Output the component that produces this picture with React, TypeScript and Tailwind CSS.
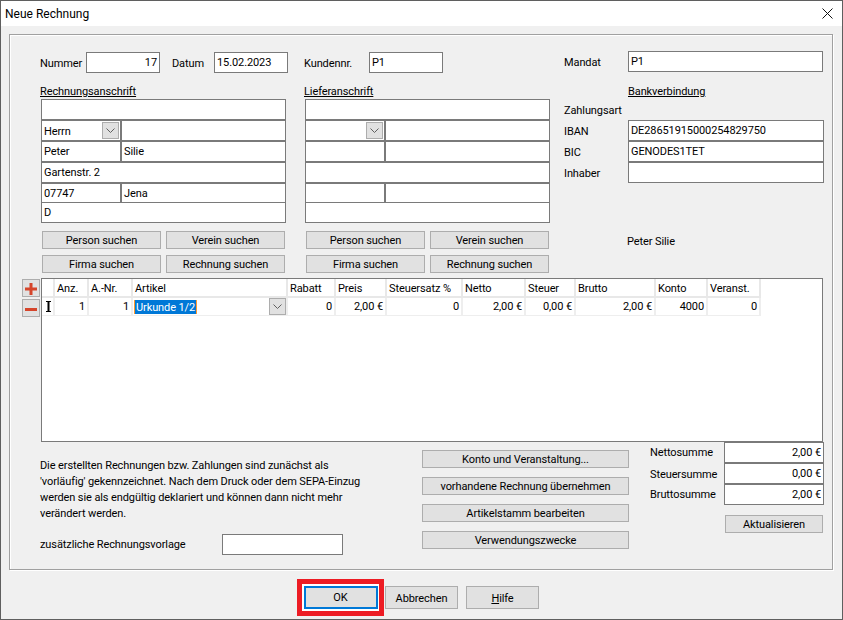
import React from "react";

const Lbl = ({ children, className = "" }: { children: React.ReactNode; className?: string }) => (
  <span className={"whitespace-nowrap leading-4 " + className}>{children}</span>
);

const Inp = ({ v = "", right = false, className = "" }: { v?: string; right?: boolean; className?: string }) => (
  <div
    className={
      "h-[21px] shrink-0 border border-[#7a7a7a] bg-white flex items-center px-[2px] leading-4 whitespace-nowrap " +
      (right ? "justify-end pr-[2px] " : "") +
      className
    }
  >
    {v}
  </div>
);

const Btn = ({ children, className = "" }: { children: React.ReactNode; className?: string }) => (
  <button className={"h-[18px] shrink-0 border border-[#adadad] bg-[#e1e1e1] flex items-center justify-center leading-4 whitespace-nowrap pt-[2px] " + className}>
    {children}
  </button>
);

const Chevron = () => (
  <svg width="9" height="5" viewBox="0 0 9 5" fill="none" stroke="#606060" strokeWidth="1">
    <path d="M0.5 0.5 L4.5 4.5 L8.5 0.5" />
  </svg>
);

const Drop = ({ className = "" }: { className?: string }) => (
  <span className={"w-[17px] h-[17px] border border-[#adadad] bg-[#e1e1e1] flex items-center justify-center shrink-0 " + className}>
    <Chevron />
  </span>
);

const Address = ({ rows, salutation }: { rows: string[]; salutation: string }) => (
  <div className="w-[245px] flex flex-col">
    <Inp v={rows[0]} />
    <div className="flex">
      <div className="w-[80px] h-[21px] border border-[#7a7a7a] bg-white flex items-center justify-between pl-[2px] pr-[1px]">
        <span className="pt-[3px]">{salutation}</span>
        <Drop />
      </div>
      <Inp v={rows[1]} className="flex-1" />
    </div>
    <div className="flex">
      <Inp v={rows[2]} className="w-[80px]" />
      <Inp v={rows[3]} className="flex-1" />
    </div>
    <Inp v={rows[4]} />
    <div className="flex h-[20px]">
      <Inp v={rows[5]} className="w-[80px] h-[20px]" />
      <Inp v={rows[6]} className="flex-1 h-[20px]" />
    </div>
    <Inp v={rows[7]} className="-mt-[1px]" />
  </div>
);

const SearchButtons = () => (
  <div className="w-[243px] ml-[1px] mt-[8px] grid grid-cols-[119px_119px] gap-x-[5px] gap-y-[6px]">
    <Btn>Person suchen</Btn>
    <Btn>Verein suchen</Btn>
    <Btn>Firma suchen</Btn>
    <Btn>Rechnung suchen</Btn>
  </div>
);

const cols = [
  { w: 34, h: "Anz.", v: "1" },
  { w: 44, h: "A.-Nr.", v: "1" },
  { w: 155, h: "Artikel", v: "" },
  { w: 48, h: "Rabatt", v: "0" },
  { w: 51, h: "Preis", v: "2,00 €" },
  { w: 76, h: "Steuersatz %", v: "0" },
  { w: 63, h: "Netto", v: "2,00 €" },
  { w: 50, h: "Steuer", v: "0,00 €" },
  { w: 80, h: "Brutto", v: "2,00 €" },
  { w: 52, h: "Konto", v: "4000" },
  { w: 53, h: "Veranst.", v: "0" },
];

const Grid = () => (
  <div className="w-[782px] h-[164px] border border-[#7a7a7a] bg-white">
    <div className="flex h-[19px] w-fit border-b-2 border-[#e8e8e8]">
      <div className="w-[13px] border-r-2 border-[#e8e8e8]" />
      {cols.map((c) => (
        <div
          key={c.h}
          style={{ width: c.w }}
          className="border-r-2 border-[#e8e8e8] pl-[2px] pt-[4px] flex items-center whitespace-nowrap overflow-hidden"
        >
          {c.h}
        </div>
      ))}
    </div>
    <div className="flex h-[18px] w-fit border-b border-[#eeeeee]">
      <div className="w-[13px] border-r-2 border-[#eeeeee] pl-[4px] flex items-center">
        <svg width="5" height="11" viewBox="0 0 5 11" fill="#000">
          <path d="M0 0 H5 V1 H3.5 V10 H5 V11 H0 V10 H1.5 V1 H0 Z" />
        </svg>
      </div>
      {cols.map((c) =>
        c.h === "Artikel" ? (
          <div key={c.h} style={{ width: c.w }} className="border-r-2 border-[#eeeeee] flex items-center justify-between pl-[1px]">
            <span className="h-[14px] bg-[#0078d7] text-white flex items-center leading-none px-[1px] pt-[1px] border-x border-[#ff9a2e]">Urkunde 1/2</span>
            <Drop className="h-[16px]" />
          </div>
        ) : (
          <div
            key={c.h}
            style={{ width: c.w }}
            className="border-r-2 border-[#eeeeee] pr-[2px] pt-[2px] flex items-center justify-end whitespace-nowrap"
          >
            {c.v}
          </div>
        )
      )}
    </div>
  </div>
);

const SumRow = ({ l, v, pad = "" }: { l: string; v: string; pad?: string }) => (
  <div className="flex items-center">
    <Lbl className={"w-[74px] " + pad}>{l}</Lbl>
    <Inp v={v} right className="w-[100px]" />
  </div>
);

export default function App() {
  return (
    <div
      className="w-[843px] h-[620px] bg-[#f0f0f0] border border-[#5f5f5f] flex flex-col text-[11px] tracking-[-0.1px] text-black overflow-hidden"
      style={{ fontFamily: 'Roboto, sans-serif' }}
    >
      <div className="h-[25px] shrink-0 bg-white flex items-center justify-between pl-[4px] pr-[9px]">
        <span className="text-[12px] tracking-normal">Neue Rechnung</span>
        <svg width="11" height="11" viewBox="0 0 11 11" stroke="#111" strokeWidth="1">
          <path d="M0.5 0.5 L10.5 10.5 M10.5 0.5 L0.5 10.5" />
        </svg>
      </div>

      <div className="mt-[8px] ml-[8px] w-[824px] h-[536px] shrink-0 border border-[#a0a0a0] shadow-[1px_1px_0_#fff,inset_1px_1px_0_#fff] pt-[17px]">
        <div className="flex">
          {/* Rechnungsanschrift */}
          <div className="w-[264px] ml-[30px] flex flex-col">
            <div className="flex items-center h-[21px]">
              <Lbl className="w-[46px] pt-[3px]">Nummer</Lbl>
              <Inp v="17" right className="w-[74px]" />
              <Lbl className="ml-[12px] w-[42px] pt-[3px]">Datum</Lbl>
              <Inp v="15.02.2023" className="w-[74px]" />
            </div>
            <Lbl className="mt-[10px] pt-[1px] underline h-[16px]">Rechnungsanschrift</Lbl>
            <div className="ml-[1px]">
              <Address salutation="Herrn" rows={["", "", "Peter", "Silie", "Gartenstr. 2", "07747", "Jena", "D"]} />
              <SearchButtons />
            </div>
          </div>

          {/* Lieferanschrift */}
          <div className="w-[260px] flex flex-col">
            <div className="flex items-center h-[21px]">
              <Lbl className="w-[65px] pt-[2px]">Kundennr.</Lbl>
              <Inp v="P1" className="w-[74px]" />
            </div>
            <Lbl className="mt-[10px] pt-[1px] underline h-[16px]">Lieferanschrift</Lbl>
            <div className="ml-[1px]">
              <Address salutation="" rows={["", "", "", "", "", "", "", ""]} />
              <SearchButtons />
            </div>
          </div>

          {/* Bank */}
          <div className="w-[260px] flex flex-col">
            <div className="flex items-center h-[21px] -mt-[1px]">
              <Lbl className="w-[64px] pt-[2px]">Mandat</Lbl>
              <Inp v="P1" className="w-[195px]" />
            </div>
            <Lbl className="mt-[11px] pt-[1px] underline h-[16px] ml-[64px]">Bankverbindung</Lbl>
            <Lbl className="h-[16px] mt-[3px] pt-[1px] mb-[2px]">Zahlungsart</Lbl>
            <div className="flex items-center">
              <Lbl className="w-[64px] pt-[2px]">IBAN</Lbl>
              <Inp v="DE28651915000254829750" className="w-[196px]" />
            </div>
            <div className="flex items-center">
              <Lbl className="w-[64px] pt-[2px]">BIC</Lbl>
              <Inp v="GENODES1TET" className="w-[196px]" />
            </div>
            <div className="flex items-center">
              <Lbl className="w-[64px] pt-[2px]">Inhaber</Lbl>
              <Inp className="w-[196px]" />
            </div>
            <Lbl className="mt-[51px] ml-[63px]">Peter Silie</Lbl>
          </div>
        </div>

        {/* Table */}
        <div className="flex mt-[5px] ml-[12px]">
          <div className="w-[19px] flex flex-col gap-[2px] pt-[1px]">
            <Btn className="w-[18px]">
              <svg width="12" height="12" viewBox="0 0 12 12" fill="#d5452b"><path d="M4.5 0 H7.5 V4.5 H12 V7.5 H7.5 V12 H4.5 V7.5 H0 V4.5 H4.5 Z" /></svg>
            </Btn>
            <Btn className="w-[18px]">
              <svg width="12" height="3" viewBox="0 0 12 3" fill="#d5452b"><rect width="12" height="3" /></svg>
            </Btn>
          </div>
          <Grid />
        </div>

        {/* Bottom */}
        <div className="flex">
          <div className="w-[382px] ml-[30px] pt-[16px] flex flex-col leading-[16px]">
            <Lbl>Die erstellten Rechnungen bzw. Zahlungen sind zunächst als</Lbl>
            <Lbl>'vorläufig' gekennzeichnet. Nach dem Druck oder dem SEPA-Einzug</Lbl>
            <Lbl>werden sie als endgültig deklariert und können dann nicht mehr</Lbl>
            <Lbl>verändert werden.</Lbl>
            <div className="flex items-center mt-[12px]">
              <Lbl className="w-[182px]">zusätzliche Rechnungsvorlage</Lbl>
              <Inp className="w-[121px]" />
            </div>
          </div>
          <div className="w-[228px] pt-[8px] flex flex-col gap-[9px]">
            <Btn className="w-[207px]">Konto und Veranstaltung...</Btn>
            <Btn className="w-[207px]">vorhandene Rechnung übernehmen</Btn>
            <Btn className="w-[207px]">Artikelstamm bearbeiten</Btn>
            <Btn className="w-[207px]">Verwendungszwecke</Btn>
          </div>
          <div className="w-[174px] flex flex-col">
            <SumRow l="Nettosumme" v="2,00 €" />
            <SumRow l="Steuersumme" v="0,00 €" pad="pt-[2px]" />
            <SumRow l="Bruttosumme" v="2,00 €" />
            <Btn className="w-[98px] ml-[75px] mt-[10px]">Aktualisieren</Btn>
          </div>
        </div>
      </div>

      <div className="flex mt-[9px] ml-[296px] items-start">
        <div className="w-[87px] h-[37px] border-[5px] border-[#ed1c24] bg-white flex items-center justify-center">
          <button className="w-[74px] h-[23px] border-2 border-[#0078d7] bg-[#e1e1e1] pt-[2px]">OK</button>
        </div>
        <Btn className="h-[23px] w-[73px] mt-[7px] ml-[1px] pt-[3px]">Abbrechen</Btn>
        <Btn className="h-[23px] w-[73px] mt-[7px] ml-[8px] pt-[3px]"><span><span className="underline">H</span>ilfe</span></Btn>
      </div>
    </div>
  );
}
